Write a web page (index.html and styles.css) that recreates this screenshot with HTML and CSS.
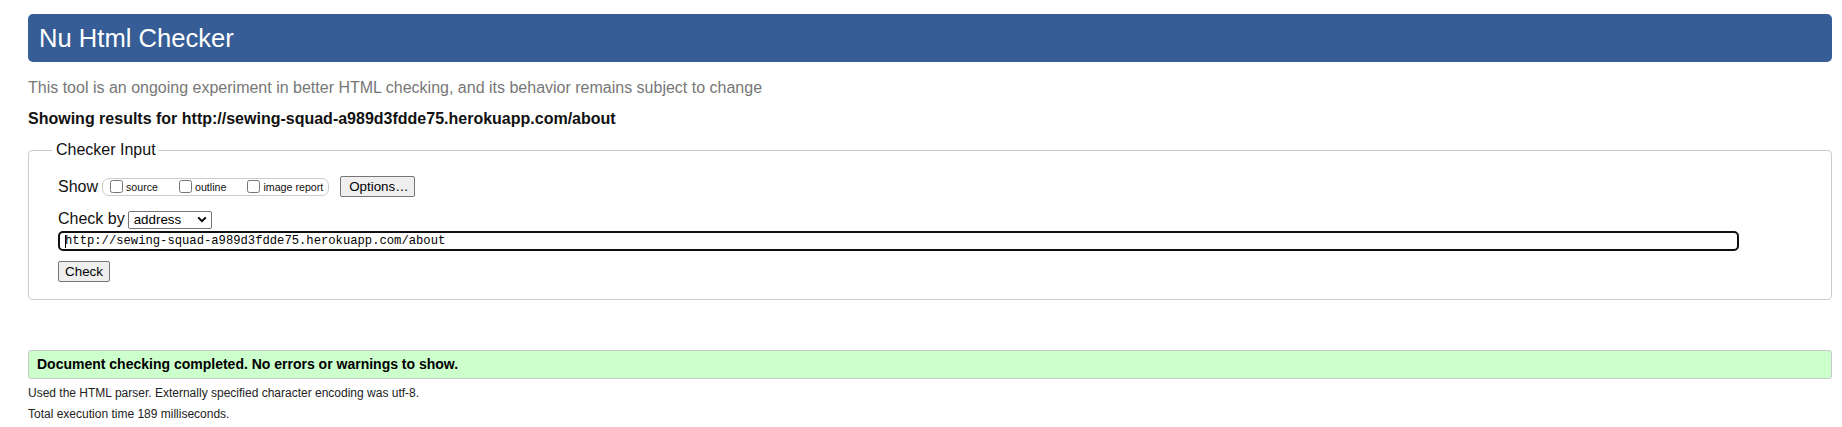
FILE: index.html
```
<!DOCTYPE html>
<html lang="en">
<head>
<meta charset="utf-8">
<title>Nu Html Checker</title>
<link rel="stylesheet" href="styles.css">
</head>
<body>
<h1 class="title">Nu Html Checker</h1>
<p class="intro">This tool is an ongoing experiment in better HTML checking, and its behavior remains subject to change</p>
<p class="showing">Showing results for http://sewing-squad-a989d3fdde75.herokuapp.com/about</p>
<fieldset class="checker">
  <legend class="legend">Checker Input</legend>
  <div class="row show-row">
    <span class="row-label">Show</span>
    <span class="opts">
      <label class="opt"><input type="checkbox" class="cb"><span>source</span></label>
      <label class="opt"><input type="checkbox" class="cb"><span>outline</span></label>
      <label class="opt last"><input type="checkbox" class="cb"><span>image report</span></label>
    </span>
    <button class="btn options">Options…</button>
  </div>
  <div class="row by-row">
    <span class="row-label">Check by</span>
    <span class="select-wrap">
      <select class="select"><option>address</option></select>
      <svg class="chev" width="10" height="7" viewBox="0 0 10 7"><path d="M1.2 1.4 L5 5.2 L8.8 1.4" fill="none" stroke="#000" stroke-width="2"/></svg>
    </span>
  </div>
  <div class="addr-wrap">
    <input class="addr" type="text" value="http://sewing-squad-a989d3fdde75.herokuapp.com/about">
    <span class="caret"></span>
  </div>
  <button class="btn check">Check</button>
</fieldset>
<div class="success">Document checking completed. No errors or warnings to show.</div>
<p class="details">Used the HTML parser. Externally specified character encoding was utf-8.</p>
<p class="details">Total execution time 189 milliseconds.</p>
</body>
</html>
```
FILE: styles.css
```
html, body {
  background: #fff;
}
body {
  margin: 0;
  padding: 14px 10px 0 28px;
  font-family: "Liberation Sans", Arial, sans-serif;
  font-size: 16px;
  color: #111;
}
.title {
  margin: 0;
  height: 48px;
  line-height: 48px;
  padding: 0 11px;
  background: #365d95;
  color: #fff;
  font-weight: normal;
  font-size: 25.6px;
  border-radius: 5px;
}
.intro {
  margin: 17px 0 0;
  line-height: 18px;
  color: #777;
}
.showing {
  margin: 12px 0 0;
  line-height: 19px;
  font-weight: bold;
}
.checker {
  margin: 13px 0 0;
  padding: 17px 29px 17px;
  border: 1px solid #ccc;
  border-radius: 4px;
  min-width: 0;
}
.legend {
  padding: 0 2px 0 4px;
  margin-left: -6px;
  line-height: 18px;
}
.row {
  display: flex;
  align-items: center;
}
.show-row {
  height: 21px;
}
.by-row {
  height: 18px;
  margin-top: 13px;
}
.row-label {
  line-height: 18px;
}
.opts {
  display: flex;
  align-items: center;
  box-sizing: border-box;
  height: 18px;
  margin-left: 4px;
  padding: 0 5px 0 3px;
  border: 1px solid #ccc;
  border-radius: 7px;
}
.opt {
  display: flex;
  align-items: center;
  font-size: 10.67px;
  margin-right: 17px;
}
.opt.last {
  margin-right: 0;
}
.cb {
  width: 13px;
  height: 13px;
  margin: 0 3px 0 4px;
}
.btn {
  box-sizing: border-box;
  font-family: "Liberation Sans", Arial, sans-serif;
  font-size: 13.33px;
  color: #000;
  background: #efefef;
  border: 1px solid #767676;
  border-radius: 2px;
  height: 21px;
  padding: 0 8px;
  line-height: 19px;
}
.options {
  margin-left: 11px;
  width: 75px;
}
.select-wrap {
  position: relative;
  display: inline-block;
  margin-left: 3px;
  height: 18px;
}
.select {
  -webkit-appearance: none;
  appearance: none;
  box-sizing: border-box;
  width: 84px;
  height: 18px;
  margin: 0;
  padding: 0 0 0 5px;
  font-family: "Liberation Sans", Arial, sans-serif;
  font-size: 13.33px;
  line-height: 16px;
  color: #000;
  background: #fff;
  border: 1px solid #767676;
  border-radius: 2px;
}
.chev {
  position: absolute;
  right: 5px;
  top: 6px;
  pointer-events: none;
}
.addr-wrap {
  position: relative;
  margin-top: 3px;
  width: 1681px;
  height: 20px;
}
.addr {
  box-sizing: border-box;
  display: block;
  width: 1681px;
  height: 20px;
  margin: 0;
  padding: 0 5px;
  border: 2px solid #101010;
  border-radius: 5px;
  font-family: "Liberation Mono", "DejaVu Sans Mono", monospace;
  font-size: 12.2px;
  color: #000;
  background: #fff;
  outline: none;
}
.caret {
  position: absolute;
  left: 7px;
  top: 4px;
  width: 1px;
  height: 13px;
  background: #000;
}
.check {
  display: block;
  margin-top: 10px;
  width: 52px;
  padding: 0 6px;
}
.success {
  margin-top: 50px;
  box-sizing: border-box;
  height: 29px;
  padding: 5px 8px;
  line-height: 17px;
  background: #ccffcc;
  border: 1px solid #c8c8c8;
  border-radius: 3px;
  font-weight: bold;
  font-size: 14px;
  color: #000;
}
.details {
  margin: 7px 0 0;
  font-size: 12px;
  line-height: 14px;
  color: #222;
}
```
